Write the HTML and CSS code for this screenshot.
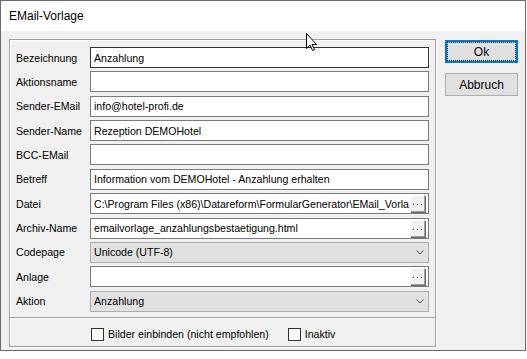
FILE: index.html
```html
<!DOCTYPE html>
<html lang="de">
<head>
    <meta charset="UTF-8">
    <title>EMail-Vorlage</title>
    <link rel="stylesheet" href="styles.css">
</head>
<body>
    <div class="window">
        <div class="titlebar">EMail-Vorlage</div>

        <div class="client">
            <div class="group">
                <div class="form">
                    <label>Bezeichnung</label>
                    <div class="edit focus"><span class="text">Anzahlung</span></div>

                    <label>Aktionsname</label>
                    <div class="edit"><span class="text"></span></div>

                    <label>Sender-EMail</label>
                    <div class="edit"><span class="text">info@hotel-profi.de</span></div>

                    <label>Sender-Name</label>
                    <div class="edit"><span class="text">Rezeption DEMOHotel</span></div>

                    <label>BCC-EMail</label>
                    <div class="edit"><span class="text"></span></div>

                    <label>Betreff</label>
                    <div class="edit"><span class="text">Information vom DEMOHotel - Anzahlung erhalten</span></div>

                    <label>Datei</label>
                    <div class="edit"><span class="text">C:\Program Files (x86)\Datareform\FormularGenerator\EMail_Vorla</span><span class="dots"><i></i><i></i><i></i></span></div>

                    <label>Archiv-Name</label>
                    <div class="edit"><span class="text">emailvorlage_anzahlungsbestaetigung.html</span><span class="dots"><i></i><i></i><i></i></span></div>

                    <label>Codepage</label>
                    <div class="edit combo"><span class="text">Unicode (UTF-8)</span>
                        <svg class="chevron" width="8" height="5" viewBox="0 0 8 5"><path d="M0.5 0.5 L4 4 L7.5 0.5" fill="none" stroke="#555" stroke-width="1"/></svg>
                    </div>

                    <label>Anlage</label>
                    <div class="edit"><span class="text"></span><span class="dots"><i></i><i></i><i></i></span></div>

                    <label>Aktion</label>
                    <div class="edit combo"><span class="text">Anzahlung</span>
                        <svg class="chevron" width="8" height="5" viewBox="0 0 8 5"><path d="M0.5 0.5 L4 4 L7.5 0.5" fill="none" stroke="#555" stroke-width="1"/></svg>
                    </div>
                </div>

                <div class="separator"></div>

                <div class="checks">
                    <label class="check"><span class="box"></span>Bilder einbinden (nicht empfohlen)</label>
                    <label class="check"><span class="box"></span>Inaktiv</label>
                </div>
            </div>

            <div class="buttons">
                <button class="btn default">Ok</button>
                <button class="btn">Abbruch</button>
            </div>
        </div>

        <!-- mouse pointer over the title bar -->
        <svg class="cursor" width="12" height="19" viewBox="0 0 12 19">
            <path d="M0.5 0.5 L0.5 15.5 L4 12 L6.5 17.5 L8.5 16.5 L6 11.5 L10.5 11.5 Z" fill="#fff" stroke="#000" stroke-width="1"/>
        </svg>
    </div>
</body>
</html>
```

FILE: styles.css
```css
html, body {
    margin: 0;
    padding: 0;
    background-color: #fff;
}

body {
    font-family: 'Liberation Sans', Arial, sans-serif;
    font-size: 10.6px;
    color: #000;
}

.window {
    position: relative;
    width: 524px;
    height: 349px;
    border: 1px solid #6b6b6b;
    background-color: #f0f0f0;
}

.titlebar {
    height: 30px;
    line-height: 31px;
    padding-left: 8px;
    background-color: #fff;
    font-size: 12px;
}

.client {
    display: flex;
    align-items: flex-start;
    padding: 8px 0 0 8px;
}

.group {
    width: 413px;
    padding: 7px 6px 0 6px;
    border: 1px solid #a0a0a0;
    box-shadow: inset 1px 1px 0 #fff, 1px 1px 0 #fff;
}

.form {
    display: grid;
    grid-template-columns: 74px 339px;
    grid-auto-rows: 21px;
    row-gap: 3.37px;
    align-items: center;
}

.edit {
    display: flex;
    align-items: center;
    height: 21px;
    box-sizing: border-box;
    border: 1px solid #7a7a7a;
    background-color: #fff;
    padding: 0 2px 0 3px;
    white-space: nowrap;
    overflow: hidden;
}

.edit.focus {
    border-color: #333;
}

.edit .text {
    flex: 1;
    overflow: hidden;
}

.dots {
    display: flex;
    align-items: center;
    justify-content: center;
    gap: 3px;
    flex: none;
    width: 15px;
    height: 17px;
    box-sizing: border-box;
    padding-top: 2px;
    border: 1px solid #fff;
    border-right-color: #a0a0a0;
    border-bottom-color: #a0a0a0;
    box-shadow: 1px 1px 0 #696969;
    background-color: #f0f0f0;
    margin-right: 1px;
}

.dots i {
    width: 1px;
    height: 1px;
    background-color: #333;
}

.combo {
    background-color: #e1e1e1;
    border-color: #adadad;
}

.chevron {
    margin-right: 2px;
}

.separator {
    height: 1px;
    margin: 5px -6px 0 -6px;
    background-color: #a0a0a0;
    border-bottom: 1px solid #fff;
}

.checks {
    display: flex;
    align-items: center;
    gap: 19px;
    height: 27px;
    padding: 4px 0 0 75px;
    box-sizing: border-box;
}

.check {
    display: flex;
    align-items: center;
    gap: 4px;
}

.box {
    width: 13px;
    height: 13px;
    box-sizing: border-box;
    border: 1px solid #333;
    background-color: #fff;
}

.buttons {
    display: flex;
    flex-direction: column;
    gap: 10px;
    margin: 1px 0 0 9px;
}

.btn {
    width: 73px;
    height: 23px;
    box-sizing: border-box;
    padding: 0;
    border: 1px solid #adadad;
    background-color: #e1e1e1;
    font-family: inherit;
    font-size: 12px;
    color: #000;
}

.btn.default {
    border: 2px solid #0078d7;
    outline: 1px dotted #000;
    outline-offset: -3px;
}

.cursor {
    position: absolute;
    left: 305px;
    top: 32px;
}
```
